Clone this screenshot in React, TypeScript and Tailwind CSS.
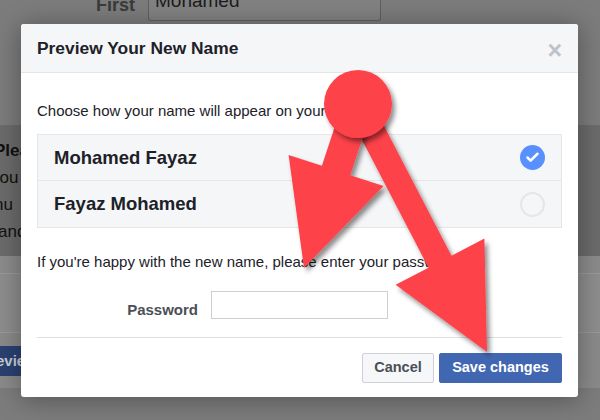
import { Check } from 'lucide-react'

const font = { fontFamily: '"Liberation Sans", Arial, sans-serif' }

function Arrows() {
  return (
    <svg className="pointer-events-none absolute inset-0" width="600" height="420" viewBox="0 0 600 420">
      <defs>
        <filter id="sh" x="-20%" y="-20%" width="140%" height="140%">
          <feDropShadow dx="3" dy="4" stdDeviation="2.5" floodColor="#000" floodOpacity="0.45" />
        </filter>
      </defs>
      <polygon
        filter="url(#sh)"
        fill="#fe4249"
        points="369.5,98 451.5,255.7 484.4,238.6 487,352 395.6,284.8 428.5,267.7 346.5,110"
      />
      <polygon
        filter="url(#sh)"
        fill="#fe4249"
        points="343.8,99.3 321.9,165.8 288.6,154.9 304,268 383.6,186.1 350.3,175.2 372.2,108.7"
      />
      <circle filter="url(#sh)" cx="358" cy="104" r="34" fill="#fe4249" />
    </svg>
  )
}

export default function App() {
  return (
    <div className="relative h-[420px] w-[600px] overflow-hidden bg-[#7c7c7c]" style={font}>
      {/* page behind the overlay */}
      <div className="flex h-[21px] items-end gap-[13px] pl-[96px]">
        <span className="mb-[7px] text-[18px] font-bold leading-none text-[#3a3a3a]">First</span>
        <div className="flex h-[34px] w-[233px] items-end rounded-b-[3px] border border-t-0 border-[#5f5f5f] bg-[#828282] px-[6px] pb-[10px]">
          <span className="text-[19px] leading-none text-[#1c1c1c]">Mohamed</span>
        </div>
      </div>
      <div className="mt-[104px] flex h-[131px] flex-col gap-[3px] bg-[#6b6b6b] pt-[14px] text-[17px] leading-[24px] text-[#111]">
        <span className="-ml-[6px] font-bold">Plea</span>
        <span className="-ml-[9px]">you</span>
        <span className="-ml-[6px]">nu</span>
        <span className="-ml-[2px]">and</span>
      </div>
      <div className="h-[18px] border-b border-[#9a9a9a] bg-[#8b8b8b]" />
      <div className="h-[59px] border-b border-[#9a9a9a] bg-[#8d8d8d]" />
      <div className="flex h-[55px] flex-col bg-[#8a8a8a] pt-[13px]">
        <div className="flex h-[30px] w-[40px] items-center bg-[#2b4171] text-[15px] font-bold text-[#c9ced8]">
          <span className="-ml-[4px]">evie</span>
        </div>
      </div>

      {/* dialog */}
      <div className="absolute left-[21px] top-[24px] w-[557px] rounded-[3px] bg-white shadow-[0_2px_26px_rgba(0,0,0,0.35)]">
        <div className="flex h-[49px] items-center justify-between rounded-t-[3px] border-b border-[#e5e5e5] bg-[#f5f6f7] pl-4 pr-[16px]">
          <span className="text-[17.4px] font-bold text-[#1d2129]">Preview Your New Name</span>
          <span className="mt-[4px] text-[25px] font-bold leading-none text-[#bec2c9]">×</span>
        </div>
        <div className="px-4 pb-[14px] pt-[28px]">
          <p className="text-[15px] leading-[20px] text-[#1d2129]">
            Choose how your name will appear on your profile:
          </p>
          <div className="mt-[13px] border border-[#e5e6e9] bg-[#f5f6f7]">
            <div className="flex h-[46px] items-center justify-between border-b border-[#e5e6e9] pl-4 pr-4">
              <span className="text-[18.5px] font-bold text-[#1d2129]">Mohamed Fayaz</span>
              <span className="flex h-[25px] w-[25px] items-center justify-center rounded-full bg-[#5890ff]">
                <Check size={15} strokeWidth={4} color="#fff" />
              </span>
            </div>
            <div className="flex h-[46px] items-center justify-between pl-4 pr-4">
              <span className="text-[18.5px] font-bold text-[#1d2129]">Fayaz Mohamed</span>
              <span className="h-[25px] w-[25px] rounded-full border-2 border-[#e4e6e9]" />
            </div>
          </div>
          <p className="mt-[24px] text-[15px] leading-[20px] text-[#1d2129]">
            If you're happy with the new name, please enter your password.
          </p>
          <div className="mt-[19px] flex h-[28px] items-center gap-[13px]">
            <label className="mt-[10px] w-[161px] text-right text-[15px] font-bold text-[#4b4f56]">Password</label>
            <input type="password" className="h-[28px] w-[177px] border border-[#ccd0d5] bg-white px-2 text-[14px] outline-none" />
          </div>
          <div className="mt-[18px] border-t border-[#dddfe2]" />
          <div className="mt-[15px] flex justify-end gap-[5px]">
            <button className="h-[30px] w-[72px] rounded-[2px] border border-[#ced0d4] bg-[#f6f7f9] text-[14.5px] font-bold text-[#4b4f56]">
              Cancel
            </button>
            <button className="h-[30px] w-[123px] rounded-[2px] border border-[#4267b2] bg-[#4267b2] text-[14.5px] font-bold text-white">
              Save changes
            </button>
          </div>
        </div>
      </div>

      <Arrows />
    </div>
  )
}
